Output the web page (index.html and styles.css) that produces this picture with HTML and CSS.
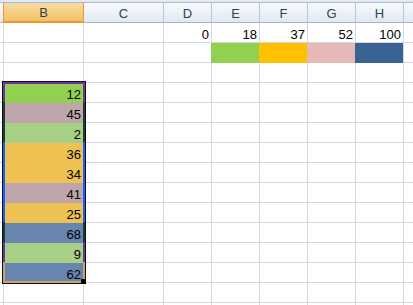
FILE: index.html
```html
<!DOCTYPE html>
<html lang="en">
<head>
  <meta charset="UTF-8">
  <title>Sheet1</title>
  <meta name="viewport" content="width=device-width, initial-scale=1.0">
  <link rel="stylesheet" href="styles.css">
</head>
<body>

<div class="sheet">
  <div class="strip"></div>
  <div class="grid" id="grid"></div>

  <!-- selection box over B4:B13 -->
  <div class="selection"></div>
  <div class="handle"></div>
</div>

<script>
  const cols = ['A', 'B', 'C', 'D', 'E', 'F', 'G', 'H', 'I'];

  const values = {
    1: {D: '0', E: '18', F: '37', G: '52', H: '100'}
  };
  const fills = {
    2: {E: 'green', F: 'amber', G: 'rose', H: 'navy'}
  };

  const columnB = [
    [12, 'green'], [45, 'mauve'], [2, 'lime'], [36, 'gold'], [34, 'gold'],
    [41, 'mauve'], [25, 'gold'], [68, 'steel'], [9, 'lime'], [62, 'steel']
  ];
  columnB.forEach(([v, c], i) => {
    values[4 + i] = {B: String(v)};
    fills[4 + i] = {B: c};
  });

  const grid = document.getElementById('grid');
  let html = '';

  cols.forEach(c => {
    let cls = 'head';
    if (c === 'A') cls += ' first';
    if (c === 'B') cls += ' picked';
    if (c === 'C') cls += ' after-picked';
    html += `<div class="${cls}">${c === 'A' || c === 'I' ? '' : c}</div>`;
  });

  for (let r = 1; r <= 15; r++) {
    cols.forEach(c => {
      const v = (values[r] && values[r][c]) || '';
      const f = fills[r] && fills[r][c];
      let cls = 'cell';
      if (c === 'A') cls += ' first';
      if (f) cls += ' fill ' + f;
      html += `<div class="${cls}">${v}</div>`;
    });
  }

  grid.innerHTML = html;
</script>

</body>
</html>
```

FILE: styles.css
```css
html, body {
  margin: 0;
  padding: 0;
  background-color: #fff;
  overflow: hidden;
}

.sheet {
  position: relative;
  width: 413px;
  height: 305px;
  overflow: hidden;
  font-family: "Liberation Sans", Arial, sans-serif;
  font-size: 13px;
}

.strip {
  height: 2px;
  background-color: #e3e9f2;
}

.grid {
  display: grid;
  grid-template-columns: 3px 80px 80px 48px 48px 48px 48px 48px 1fr;
  grid-template-rows: 21px;
  grid-auto-rows: 20px;
}

.head {
  box-sizing: border-box;
  display: flex;
  align-items: center;
  justify-content: center;
  border-top: 1px solid #a3bcd7;
  border-bottom: 1px solid #9eb6ce;
  border-left: 1px solid #b7c7da;
  background: linear-gradient(to bottom, #f9fafd, #e2e8f1);
  color: #2f4252;
  padding-top: 1px;
}

.head.picked {
  background: linear-gradient(to bottom, #f9dba2, #f2c265);
  border-left-color: #f29536;
  border-bottom: 2px solid #f29536;
}

.head.after-picked {
  border-left-color: #f29536;
}

.cell {
  box-sizing: border-box;
  display: flex;
  align-items: flex-end;
  justify-content: flex-end;
  padding-right: 2px;
  border-left: 1px solid #d0d7e5;
  border-bottom: 1px solid #d0d7e5;
  line-height: 15px;
  color: #000;
}

.first {
  border-left: none;
}

.fill {
  border-color: transparent;
}

.green { background-color: #92d050; }
.amber { background-color: #ffc000; }
.rose  { background-color: #e6b9b8; }
.navy  { background-color: #3a6293; box-shadow: 1px 0 0 #3a6293; }
.mauve { background-color: #bea6ac; }
.lime  { background-color: #a7d086; }
.gold  { background-color: #edc253; }
.steel { background-color: #6885b0; }

.selection {
  position: absolute;
  left: 3px;
  top: 82px;
  width: 82px;
  height: 201px;
  box-sizing: border-box;
  border: 2px solid #7030a0;
  border-image: linear-gradient(to bottom,
    #7030a0 0 20px,
    #1d3b33 20px 60px,
    #1a5cff 60px 140px,
    #1d3b33 140px 160px,
    #7030a0 160px 180px,
    #c9a26b 180px) 2;
  box-shadow: 0 0 0 1px #111;
}

.handle {
  position: absolute;
  left: 81px;
  top: 279px;
  width: 5px;
  height: 5px;
  background-color: #000;
}
```
